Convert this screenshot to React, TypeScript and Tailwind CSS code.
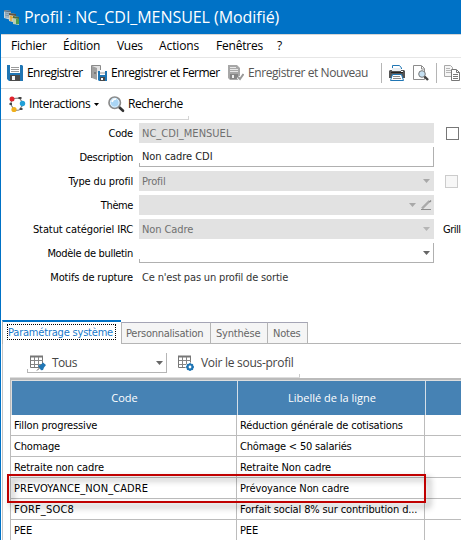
import React from "react";

const ui = "font-['Open_Sans','Noto_Sans',sans-serif]";
const form = "font-['DejaVu_Sans_Condensed','DejaVu_Sans',sans-serif]";

function Caret({ className = "" }: { className?: string }) {
  return (
    <svg width="7" height="4" viewBox="0 0 7 4" className={"shrink-0 " + className}>
      <path d="M0 0h7L3.5 4z" fill="currentColor" />
    </svg>
  );
}

function AppIcon() {
  return (
    <svg width="17" height="17" viewBox="0 0 17 17" className="shrink-0">
      <path d="M1 1l7 1v9l-7-2z" fill="#c9d3da" />
      <path d="M1 1l7 1v1.500l-7-1z" fill="#5e7384" />
      <path d="M2 4l5 1M2 6l5 1M3 3v6M5 3v6" stroke="#7c98ad" strokeWidth="1" />
      <path d="M6 4l7 1v9l-7-2z" fill="#d9cfb4" />
      <path d="M6 4l7 1v2l-7-1z" fill="#5f5340" />
      <path d="M7 8l5 1M8 7v5" stroke="#e3a735" strokeWidth="1.400" />
      <path d="M10 7l6 1v8l-6-1z" fill="#b9cfb2" />
      <path d="M10 7l6 1v2l-6-1z" fill="#4c6a45" />
      <path d="M13 10h3v5h-3z" fill="#4d9d4f" />
    </svg>
  );
}

function SaveIcon() {
  return (
    <svg width="16" height="16" viewBox="0 0 16 16" className="shrink-0">
      <path d="M0 0h15l1 1v15H2l-2-2z" fill="#2076b4" />
      <path d="M3 0h10v8H3z" fill="#fff" />
      <path d="M4 2.500h8M4 4.500h8M4 6.500h8" stroke="#9a9a9a" />
      <path d="M3 10h10v6H3z" fill="#4a4a4a" />
      <path d="M5 11h3v4H5z" fill="#f3f3f3" />
    </svg>
  );
}

function SaveCloseIcon() {
  return (
    <svg width="16" height="16" viewBox="0 0 16 16" className="shrink-0">
      <path d="M.5 13V.5h9V5" fill="#e2e2e2" stroke="#8a8a8a" />
      <path d="M1 1l5 2v12l-5-2z" fill="#a0a0a0" />
      <path d="M4 7v2" stroke="#555" />
      <path d="M7 6h9v10H8l-1-1z" fill="#2076b4" />
      <path d="M9 6h5v4H9z" fill="#fff" />
      <path d="M9 8h5" stroke="#999" />
      <path d="M9 12h5v4H9z" fill="#4a4a4a" />
      <path d="M10 13h2v2h-2z" fill="#fff" />
    </svg>
  );
}

function SaveNewIcon() {
  return (
    <svg width="16" height="16" viewBox="0 0 16 16" className="shrink-0">
      <path d="M0 0h9l3 3v12H2l-2-2z" fill="#a7a7a7" />
      <path d="M2 2h6v2h2v3H2z" fill="#e7e7e7" />
      <path d="M2 3.500h7M2 5.500h8" stroke="#aaa" />
      <path d="M2 9h8v5H2z" fill="#858585" />
      <path d="M4 10h2v3H4z" fill="#eee" />
      <path d="M10 12l2 2 3.500-5" fill="none" stroke="#fff" strokeWidth="3.500" />
      <path d="M10 12l2 2 3.500-5" fill="none" stroke="#999" strokeWidth="2" />
    </svg>
  );
}

function PrintIcon() {
  return (
    <svg width="16" height="16" viewBox="0 0 16 16" className="shrink-0">
      <path d="M3.500 4V.5h7L12.500 3v1" fill="#fff" stroke="#2076b4" />
      <path d="M1 5h14l1 1v7H0V6z" fill="#555" />
      <path d="M3 3h9v3H3z" fill="#e9eef2" />
      <path d="M2 7.500h12" stroke="#222" />
      <path d="M12 6h2v1h-2z" fill="#fff" />
      <path d="M3.500 9.500h9l2 6h-13z" fill="#fff" stroke="#2076b4" />
      <path d="M4 11.500h7M4 13.500h8" stroke="#888" />
    </svg>
  );
}

function PreviewIcon() {
  return (
    <svg width="16" height="16" viewBox="0 0 16 16" className="shrink-0">
      <path d="M.5.5h8l3 3v11H.5z" fill="#fff" stroke="#8c8c8c" />
      <path d="M8.500 1v3h3" fill="none" stroke="#8c8c8c" />
      <circle cx="9" cy="9" r="3.300" fill="#c5e0f2" stroke="#777" />
      <path d="M11.500 11.500l3.500 3.500" stroke="#444" strokeWidth="2.400" />
    </svg>
  );
}

function CopyIcon() {
  return (
    <svg width="16" height="16" viewBox="0 0 16 16" className="shrink-0">
      <path d="M.5.5h6l2 2v9h-8z" fill="#f5f5f5" stroke="#a8a8a8" />
      <path d="M2 3.500h4M2 5.500h5M2 7.500h5" stroke="#b5b5b5" />
      <path d="M7.500 4.500h5l3 3v8h-8z" fill="#fff" stroke="#777" />
      <path d="M12.500 5v2.500h3" fill="none" stroke="#777" />
      <path d="M9 9.500h5M9 11.500h5M9 13.500h5" stroke="#777" />
    </svg>
  );
}

function InteractionsIcon() {
  return (
    <svg width="17" height="17" viewBox="0 0 17 17" className="shrink-0">
      <path d="M4 2.500L10.500 2 13 6v4l-3 4-5 .5M3 4L1.500 8 4 12" fill="none" stroke="#777" strokeWidth="1.100" />
      <circle cx="3" cy="3" r="2.500" fill="#e0222c" />
      <circle cx="13.500" cy="7.500" r="2.700" fill="#22a0d8" />
      <circle cx="5" cy="13.500" r="2.600" fill="#f0b01c" />
      <path d="M9.500 2h3M11 13h2.500M.5 8h2.500" stroke="#444" strokeWidth="2" />
    </svg>
  );
}

function SearchIcon() {
  return (
    <svg width="17" height="17" viewBox="0 0 17 17" className="shrink-0">
      <path d="M11 11l4 3.800" stroke="#333" strokeWidth="2.600" strokeLinecap="round" />
      <circle cx="6.700" cy="6.700" r="5.700" fill="#a9d5f5" stroke="#8b8b8b" strokeWidth="1.700" />
      <circle cx="6.700" cy="6.700" r="4.300" fill="none" stroke="#e1f1fb" />
      <path d="M4 6q1-3 4-3" fill="none" stroke="#fff" strokeWidth="1.500" />
    </svg>
  );
}

function GridIcon({ gear = false }: { gear?: boolean }) {
  return (
    <svg width="16" height="16" viewBox="0 0 16 16" className="shrink-0">
      <path d="M.5 1.500h12v11H.5z" fill="#fff" stroke="#777" />
      <path d="M0 .5h13v2H0z" fill="#777" />
      <path d="M4.500 2v10M8.500 2v10M1 5.500h12M1 9.500h12" stroke="#858585" />
      {gear ? (
        <>
          <circle cx="12" cy="12" r="4.500" fill="#fff" />
          <circle cx="12" cy="12" r="2.500" fill="none" stroke="#2076b4" strokeWidth="2.200" />
          <path d="M12 8v1.500M12 14.500V16M8 12h1.500M14.500 12H16M9.200 9.200l1 1M13.800 13.800l1 1M14.800 9.200l-1 1M10.200 13.800l-1 1" stroke="#2076b4" strokeWidth="1.400" />
        </>
      ) : (
        <>
          <path d="M7 15.500l3-3" stroke="#555" />
          <path d="M8 10.500l2.500-.5L13 7.500l3 2.500-2 2.500-1 2.500-2 .2z" fill="#2076b4" />
        </>
      )}
    </svg>
  );
}

function PencilIcon() {
  return (
    <svg width="11" height="11" viewBox="0 0 11 11" className="shrink-0">
      <path d="M1 8.500L8.500 1" stroke="#aaa" strokeWidth="2.400" />
      <path d="M8 1.500L9.500 0l1 1L9 2.500z" fill="#888" />
      <path d="M0 9.500h10" stroke="#8d8d8d" />
    </svg>
  );
}

type FieldProps = { label: string; track: string; children: React.ReactNode };

function Row({ label, track, children }: FieldProps) {
  return (
    <div className="flex h-5 items-center">
      <div className={"w-[132px] shrink-0 pt-[2px] text-right whitespace-nowrap text-black " + track}>{label}</div>
      <div className="ml-1.5 flex h-5 grow items-center">{children}</div>
    </div>
  );
}

const disabled = "flex h-5 w-[295px] shrink-0 items-center bg-[#e2e2e2] pl-[3px] text-[#707070] whitespace-nowrap";

function EditBox({ children }: { children?: React.ReactNode }) {
  return (
    <div className="relative flex h-5 w-[295px] items-center border-r border-b border-[#b0b0b0] pl-[3px] whitespace-nowrap text-[#222]">
      {children}
      <span className="absolute bottom-0 left-0 h-[3px] w-px bg-[#b0b0b0]" />
    </div>
  );
}

const rows: [string, string, string, string][] = [
  ["Fillon progressive", "tracking-[-0.15px]", "Réduction générale de cotisations", "tracking-[-0.17px]"],
  ["Chomage", "tracking-[-0.2px]", "Chômage < 50 salariés", "tracking-[-0.2px]"],
  ["Retraite non cadre", "tracking-[-0.1px]", "Retraite Non cadre", "tracking-[-0.1px]"],
  ["PREVOYANCE_NON_CADRE", "tracking-[0.09px]", "Prévoyance Non cadre", "tracking-[-0.1px]"],
  ["FORF_SOC8", "tracking-[0.2px]", "Forfait social 8% sur contribution d...", "tracking-[-0.13px]"],
  ["PEE", "tracking-[-0.1px]", "PEE", "tracking-[-0.1px]"],
];

export default function App() {
  return (
    <div className={"relative flex h-[540px] w-[461px] flex-col overflow-hidden border-l border-[#0072c6] bg-white " + ui}>
      <header className="flex h-[34px] shrink-0 items-center gap-1 bg-[#0072c6] pl-[2px] text-[16px] whitespace-nowrap text-white">
        <AppIcon />
        <span className="tracking-[-0.05px]">Profil : NC_CDI_MENSUEL (Modifié)</span>
      </header>

      <nav className="flex h-6 shrink-0 items-center border-t border-b border-t-[#d5d5d5] border-b-[#e6e6e6] pl-[10px] text-[12px] whitespace-nowrap text-black">
        <span className="w-[52px] tracking-[-0.2px]">Fichier</span>
        <span className="w-[54px] tracking-[-0.25px]">Édition</span>
        <span className="w-[42px] tracking-[-0.3px]">Vues</span>
        <span className="w-[57px] tracking-[-0.1px]">Actions</span>
        <span className="w-[61px] tracking-[-0.2px]">Fenêtres</span>
        <span>?</span>
      </nav>

      <div className="flex h-[31px] shrink-0 items-center border-b border-[#d9d9d9] pl-[6px] text-[12px] whitespace-nowrap text-black">
        <SaveIcon />
        <span className="ml-1 w-16 tracking-[-0.55px]">Enregistrer</span>
        <SaveCloseIcon />
        <span className="ml-1 w-[117px] tracking-[-0.52px]">Enregistrer et Fermer</span>
        <SaveNewIcon />
        <span className="ml-1 w-[133px] tracking-[-0.43px] text-[#555]">Enregistrer et Nouveau</span>
        <span className="h-5 w-px shrink-0 bg-[#b5b5b5]" />
        <span className="ml-[7px] flex gap-2">
          <PrintIcon />
          <PreviewIcon />
        </span>
        <span className="mr-[7px] ml-[7px] h-5 w-px shrink-0 bg-[#b5b5b5]" />
        <CopyIcon />
      </div>

      <div className="relative flex h-[31px] w-[188px] shrink-0 items-center border-b border-[#d5d5d5] pl-2 text-[12px] whitespace-nowrap text-black">
        <InteractionsIcon />
        <span className="ml-[3px] w-[65px] tracking-[-0.45px]">Interactions</span>
        <Caret className="h-[3px] w-[5px]" />
        <span className="w-[9px]" />
        <SearchIcon />
        <span className="ml-[3px] tracking-[-0.45px]">Recherche</span>
        <span className="absolute right-0 bottom-0 h-[3px] w-px bg-[#d5d5d5]" />
      </div>

      <section className={"flex h-[200px] shrink-0 flex-col gap-1 pt-[3px] text-[11px] " + form}>
        <Row label="Code" track="tracking-[-0.2px]">
          <div className={disabled}><span className="pt-[2px] tracking-[0.02px]">NC_CDI_MENSUEL</span></div>
          <span className="ml-3 size-[13px] border border-[#777]" />
        </Row>
        <Row label="Description" track="tracking-[-0.25px]">
          <EditBox><span className="pt-[2px] tracking-[-0.05px]">Non cadre CDI</span></EditBox>
        </Row>
        <Row label="Type du profil" track="tracking-[-0.15px]">
          <div className={disabled}>
            <span className="pt-[2px] tracking-[-0.2px]">Profil</span>
            <Caret className="mr-1 ml-auto text-[#a8a8a8]" />
          </div>
          <span className="ml-[11px] size-[13px] border border-[#ccc] bg-[#f7f7f7]" />
        </Row>
        <Row label="Thème" track="tracking-[-0.4px]">
          <div className={disabled}>
            <Caret className="mr-[5px] ml-auto text-[#a8a8a8]" />
            <span className="mr-[2px]"><PencilIcon /></span>
          </div>
        </Row>
        <Row label="Statut catégoriel IRC" track="tracking-[-0.1px]">
          <div className={disabled}>
            <span className="pt-[2px] tracking-[-0.1px]">Non Cadre</span>
            <Caret className="mr-1 ml-auto text-[#b5b5b5]" />
          </div>
          <span className="ml-[9px] pt-[2px] tracking-[-0.5px] text-black">Grille</span>
        </Row>
        <Row label="Modèle de bulletin" track="tracking-[-0.33px]">
          <EditBox><Caret className="mr-[3px] ml-auto text-[#666]" /></EditBox>
        </Row>
        <Row label="Motifs de rupture" track="tracking-[-0.15px]">
          <span className="pt-[2px] pl-[3px] tracking-[-0.17px] whitespace-nowrap text-[#333]">Ce n'est pas un profil de sortie</span>
        </Row>
      </section>

      <div className={"ml-px flex h-6 shrink-0 text-[11px] whitespace-nowrap text-[#666] " + form}>
        <div className="h-6 w-[119px] border-t-2 border-l border-t-[#0072c6] border-l-[#b5b5b5] pt-[2px] pl-1">
          <span className="flex h-4 w-[109px] items-center border border-dotted border-black pt-[2px] tracking-[-0.2px] text-[#1979ca]">Paramétrage système</span>
        </div>
        <div className="mt-[2px] flex w-[90px] items-center border border-t-[#a5a5b5] border-r-[#b5b5b5] border-b-[#b5b5b5] border-l-[#b5b5b5] bg-[#f5f5f5] pt-[2px] pl-1 tracking-[-0.25px]">Personnalisation</div>
        <div className="mt-[2px] flex w-[57px] items-center border-t border-r border-b border-t-[#a5a5b5] border-r-[#b5b5b5] border-b-[#b5b5b5] bg-[#f5f5f5] pt-[2px] pl-[5px] tracking-[-0.2px]">Synthèse</div>
        <div className="mt-[2px] flex w-10 items-center border-t border-r border-b border-t-[#a5a5b5] border-r-[#b5b5b5] border-b-[#b5b5b5] bg-[#f5f5f5] pt-[2px] pl-[5px] tracking-[-0.2px]">Notes</div>
        <div className="grow border-b border-[#b5b5b5]" />
      </div>

      <main className="ml-px flex grow flex-col border-l border-[#c5c5c5]">
        <div className="relative ml-[7px] flex h-[34px] w-[290px] shrink-0 items-start border-b border-[#ddd] pt-[9px] text-[12px] whitespace-nowrap text-[#444]">
          <div className="relative ml-[17px] flex h-5 w-[140px] items-center border-r border-b border-[#b5b5b5] pl-[3px]">
            <GridIcon />
            <span className="ml-[6px] pt-px tracking-[-0.5px]">Tous</span>
            <Caret className="mr-[3px] ml-auto text-[#666]" />
            <span className="absolute bottom-0 left-0 h-[3px] w-px bg-[#b5b5b5]" />
          </div>
          <div className="ml-[11px] flex h-5 items-center">
            <GridIcon gear />
            <span className="ml-[7px] tracking-[-0.28px]">Voir le sous-profil</span>
          </div>
          <span className="absolute right-0 bottom-0 h-[3px] w-px bg-[#ccc]" />
        </div>

        <div className="ml-[7px] flex grow flex-col border-t-2 border-l border-[#bbb]">
          <div className="flex h-[35px] shrink-0 border-t border-l border-[#ddd] text-[11px] text-white">
            <div className="flex w-[226px] items-center justify-center border-r border-[#d5dfe8] bg-[#4682b4]">Code</div>
            <div className="flex w-[188px] items-center justify-center border-r border-[#d5dfe8] bg-[#4682b4] pl-px">Libellé de la ligne</div>
            <div className="grow bg-[#4682b4]" />
          </div>
          <div className={"text-[11px] whitespace-nowrap text-black " + form}>
            {rows.map(([code, ct, label, lt]) => (
              <div key={code} className="flex h-[21px] border-b border-[#bcbcbc]">
                <div className={"flex w-[226px] items-center border-r border-[#bcbcbc] pt-[2px] pl-[3px] " + ct}>{code}</div>
                <div className={"flex w-[188px] items-center border-r border-[#bcbcbc] pt-[2px] pl-[3px] " + lt}>{label}</div>
              </div>
            ))}
          </div>
        </div>
      </main>

      <div className="absolute top-[474px] left-[6px] h-[29px] w-[419px] border-2 border-[#c00000] drop-shadow-[4px_4px_3px_rgba(0,0,0,0.45)]" />
    </div>
  );
}
